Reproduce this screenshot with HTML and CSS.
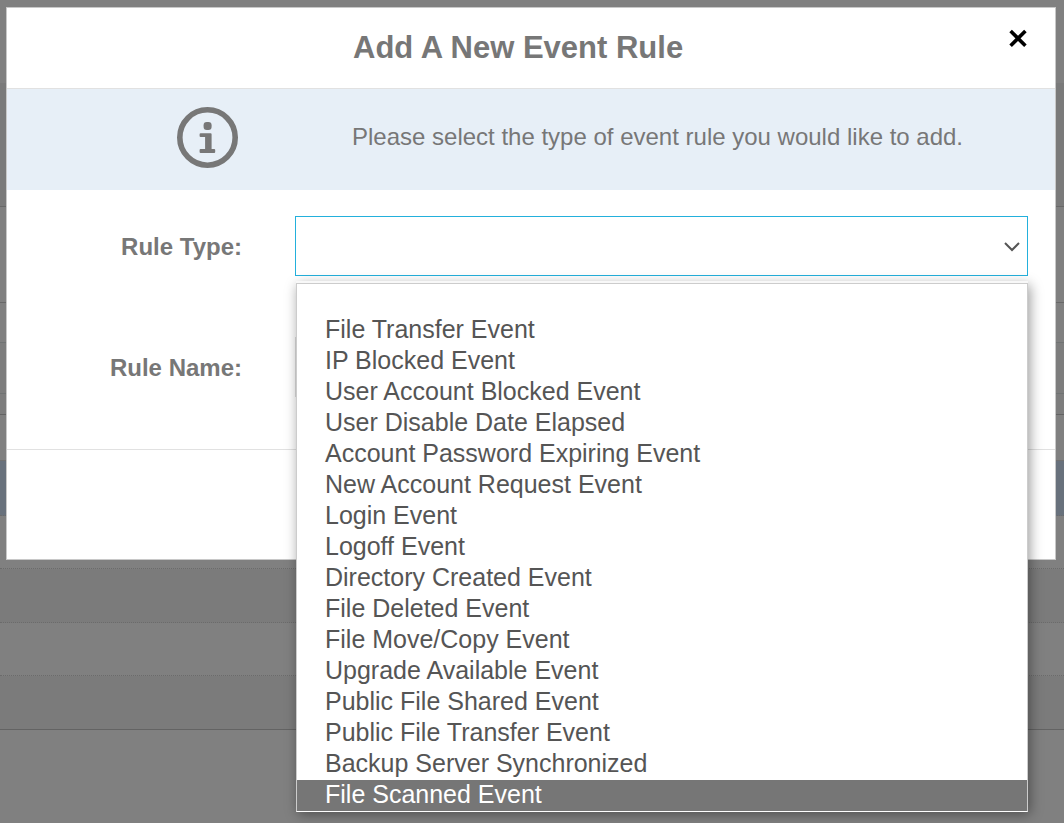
FILE: index.html
```html
<!DOCTYPE html>
<html lang="en">
<head>
<meta charset="utf-8">
<title>Add A New Event Rule</title>
<link rel="stylesheet" href="styles.css">
</head>
<body>
<div class="backdrop" aria-hidden="true">
  <div class="band band-top"></div>
  <div class="band band-toolbar"></div>
  <div class="band band-filters"></div>
  <div class="band band-tabs"></div>
  <div class="band band-search"></div>
  <div class="band band-columns"></div>
  <div class="band band-heading"></div>
  <div class="row row-selected"></div>
  <div class="row"></div>
  <div class="row row-alt"></div>
  <div class="row"></div>
  <div class="row row-alt row-last"></div>
</div>
<main class="dialog" role="dialog" aria-modal="true" aria-labelledby="dialog-title">
  <header class="dialog-header">
    <h1 class="dialog-title" id="dialog-title">Add A New Event Rule</h1>
    <button class="close" type="button" aria-label="Close">
      <svg width="20" height="20" viewBox="0 0 20 20" aria-hidden="true"><path d="M2.600 3 17.400 17.800M17.400 3 2.600 17.800" fill="none" stroke="#000" stroke-width="3.600"/></svg>
    </button>
  </header>
  <div class="notice">
    <svg class="notice-icon" width="62" height="62" viewBox="0 0 62 62" aria-hidden="true">
      <circle cx="31.500" cy="31.500" r="27.700" fill="none" stroke="#777" stroke-width="5.600"/>
      <rect x="27.600" y="16" width="8" height="8" rx="3.200" fill="#777"/>
      <path d="M24.600 27.200h10q1 0 1 1v14.700h2.600q1 0 1 1v2q0 1-1 1H24.600q-1 0-1-1v-2q0-1 1-1h4.500V31h-4.500q-1 0-1-1v-1.800q0-1 1-1z" fill="#777"/>
    </svg>
    <p class="notice-text">Please select the type of event rule you would like to add.</p>
  </div>
  <form class="fields">
    <label class="label" for="rule-type">Rule Type:</label>
    <div class="picker">
      <select class="control select" id="rule-type"><option></option></select>
      <svg class="chevron" width="18" height="12" viewBox="0 0 18 12" aria-hidden="true"><path d="M2 2 9 9 16 2" fill="none" stroke="#555" stroke-width="2"/></svg>
      <ul class="menu" role="listbox" aria-label="Rule Type">
        <li class="option" role="option"></li>
        <li class="option" role="option">File Transfer Event</li>
        <li class="option" role="option">IP Blocked Event</li>
        <li class="option" role="option">User Account Blocked Event</li>
        <li class="option" role="option">User Disable Date Elapsed</li>
        <li class="option" role="option">Account Password Expiring Event</li>
        <li class="option" role="option">New Account Request Event</li>
        <li class="option" role="option">Login Event</li>
        <li class="option" role="option">Logoff Event</li>
        <li class="option" role="option">Directory Created Event</li>
        <li class="option" role="option">File Deleted Event</li>
        <li class="option" role="option">File Move/Copy Event</li>
        <li class="option" role="option">Upgrade Available Event</li>
        <li class="option" role="option">Public File Shared Event</li>
        <li class="option" role="option">Public File Transfer Event</li>
        <li class="option" role="option">Backup Server Synchronized</li>
        <li class="option option-active" role="option" aria-selected="true">File Scanned Event</li>
      </ul>
    </div>
    <label class="label" for="rule-name">Rule Name:</label>
    <input class="control" id="rule-name" type="text">
  </form>
  <footer class="dialog-footer"></footer>
</main>
</body>
</html>
```
FILE: styles.css
```css
* {
  box-sizing: border-box;
}

body {
  margin: 0;
  min-height: 100vh;
  overflow: hidden;
  background: #808080;
  color: #777;
  font: 24px/31px "Liberation Sans", Arial, sans-serif;
}

.backdrop {
  position: absolute;
  inset: 0;
  overflow: hidden;
}

.band {
  border-bottom: 1px solid #707373;
}

.band-top { height: 83px; border-bottom: 0; }
.band-toolbar { height: 124px; background: #7a7a7a; border-color: #686868; }
.band-filters { height: 96px; border-color: #686868; }
.band-tabs { height: 40px; }
.band-search { height: 51px; background: #7d7d7d; }
.band-columns { height: 21px; background: #7d7d7d; border-color: #636363; }
.band-heading { height: 46px; border-color: #707070; }

.row {
  height: 53px;
  border-bottom: 1px dotted #6b6b6b;
}

.row-alt { height: 54px; background: #7b7b7b; }
.row-selected { height: 55px; background: #68717c; }
.row-last { border-bottom: 1px solid #636363; }

.dialog {
  position: relative;
  margin: 7px 8px 0 6px;
  background: #fff;
  border: 1px solid #c8c8c8;
}

.dialog-header {
  display: flex;
  align-items: flex-start;
  justify-content: space-between;
  height: 81px;
  padding: 20px 27px 0 346px;
  border-bottom: 1px solid #e1e1e1;
}

.dialog-title {
  margin: 0;
  font-size: 31px;
  line-height: 40px;
}

.close {
  display: flex;
  padding: 0;
  border: 0;
  background: none;
}

.notice {
  display: grid;
  grid-template-columns: 345px 1fr;
  padding: 17px 27px 22px 0;
  background: #e7eff7;
}

.notice-icon {
  justify-self: end;
  margin-right: 114px;
  overflow: visible;
}

.notice-text {
  margin: 0;
  padding-top: 15px;
}

.fields {
  display: grid;
  grid-template-columns: 235px 1fr;
  column-gap: 53px;
  row-gap: 61px;
  align-items: center;
  padding: 26px 27px 52px 0;
}

.label {
  font-weight: bold;
  text-align: right;
}

.picker {
  position: relative;
}

.control {
  display: block;
  width: 100%;
  height: 60px;
  padding: 0 28px;
  border: 1px solid #ddd;
  border-radius: 0;
  outline: 0;
  background: #fff;
  color: #555;
  font: inherit;
}

.select {
  appearance: none;
  border-color: #23b0dc;
}

.chevron {
  position: absolute;
  top: 25px;
  right: 7px;
}

.menu {
  position: absolute;
  top: 67px;
  left: 1px;
  right: 0;
  z-index: 1;
  margin: 0;
  padding: 0;
  list-style: none;
  background: #fff;
  border: 1px solid #ccc;
  border-bottom-color: #fff;
  box-shadow: 0 -2px 0 #f8f8f8, 2px 2px 12px rgba(0, 0, 0, 0.4);
  color: #555;
  font-size: 25px;
  line-height: 29px;
}

.option {
  height: 31px;
  padding: 0 28px;
}

.option-active {
  background: #767676;
  color: #fff;
}

.dialog-footer {
  height: 110px;
  border-top: 1px solid #e1e1e1;
}
```
